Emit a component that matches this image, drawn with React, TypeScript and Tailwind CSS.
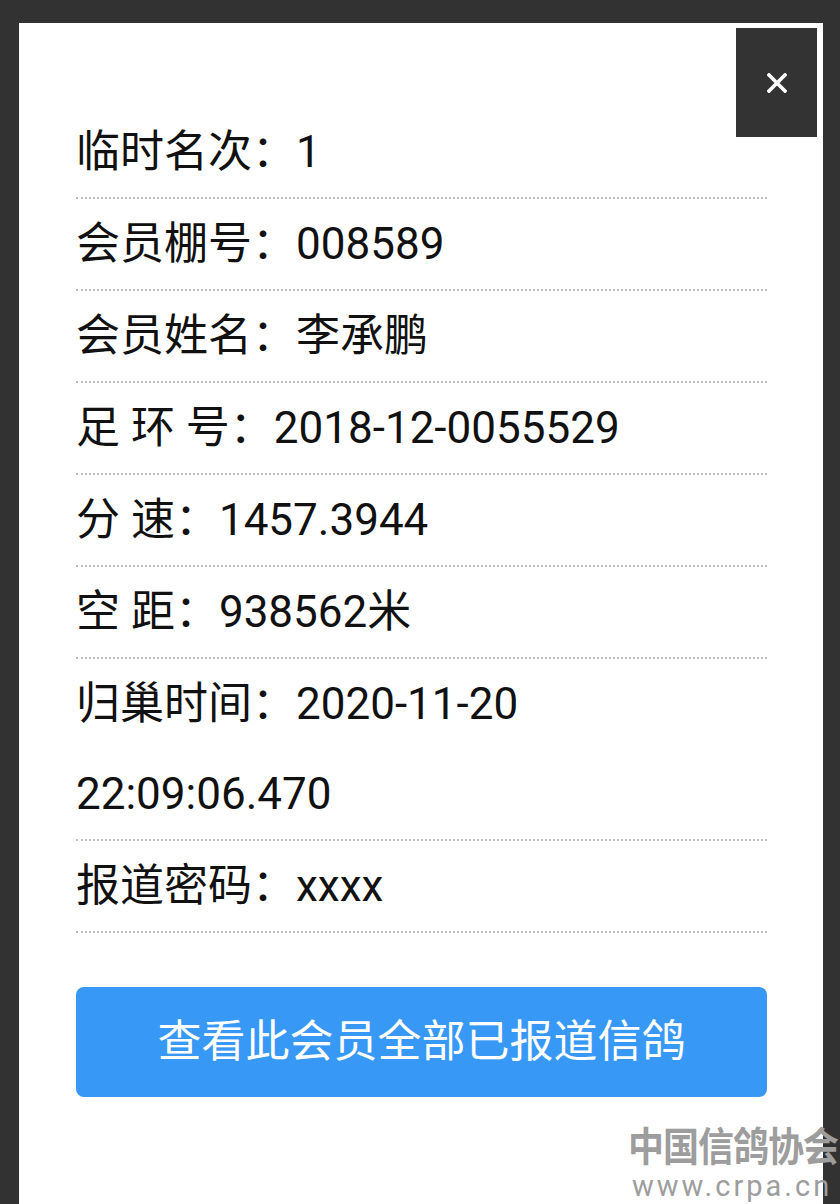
import React from 'react'

const rows = [
  '临时名次：1',
  '会员棚号：008589',
  '会员姓名：李承鹏',
  '足 环 号：2018-12-0055529',
  '分 速：1457.3944',
  '空 距：938562米',
  '归巢时间：2020-11-20 22:09:06.470',
  '报道密码：xxxx',
]

const App = () => {
  return (
    <div
      className="relative w-[840px] h-[1204px] overflow-hidden bg-[#323232] pt-[23px] pl-[19px]"
      style={{ fontFamily: 'Roboto, "Noto Sans CJK SC", sans-serif' }}
    >
      <div className="relative w-[804px] min-h-[1181px] bg-white pt-[84px] pl-[57px] pr-[56px]">
        <button className="absolute top-[5px] right-[6px] w-[81px] h-[109px] bg-[#333333] flex items-center justify-center">
          <svg width="20" height="20" viewBox="0 0 20 20">
            <path d="M2 2 L18 18 M18 2 L2 18" stroke="#ffffff" strokeWidth="3.6" strokeLinecap="square" />
          </svg>
        </button>

        <div className="text-[44px] text-[#111111]">
          {rows.map((row) => (
            <div key={row} className="leading-[90px] border-b-2 border-dotted border-[#bdbdbd] whitespace-pre-wrap">
              {row.startsWith('归巢时间') ? (
                <>
                  归巢时间：2020-11-20
                  <br />
                  22:09:06.470
                </>
              ) : (
                row
              )}
            </div>
          ))}
        </div>

        <button className="mt-[54px] w-full h-[110px] rounded-lg bg-[#3898f5] text-white text-[44px]">
          查看此会员全部已报道信鸽
        </button>
      </div>

      <div className="absolute left-[628px] top-[1121px] text-[#9d9d9d] leading-none">
        <div
          className="text-[36px] leading-[50px] font-bold tracking-[-1px] origin-bottom scale-y-110"
          style={{ fontFamily: '"Noto Sans CJK SC", sans-serif' }}
        >
          中国信鸽协会
        </div>
        <div className="text-[29px] leading-[30px] tracking-[3px] pl-[4px]">www.crpa.cn</div>
      </div>
    </div>
  )
}

export default App
